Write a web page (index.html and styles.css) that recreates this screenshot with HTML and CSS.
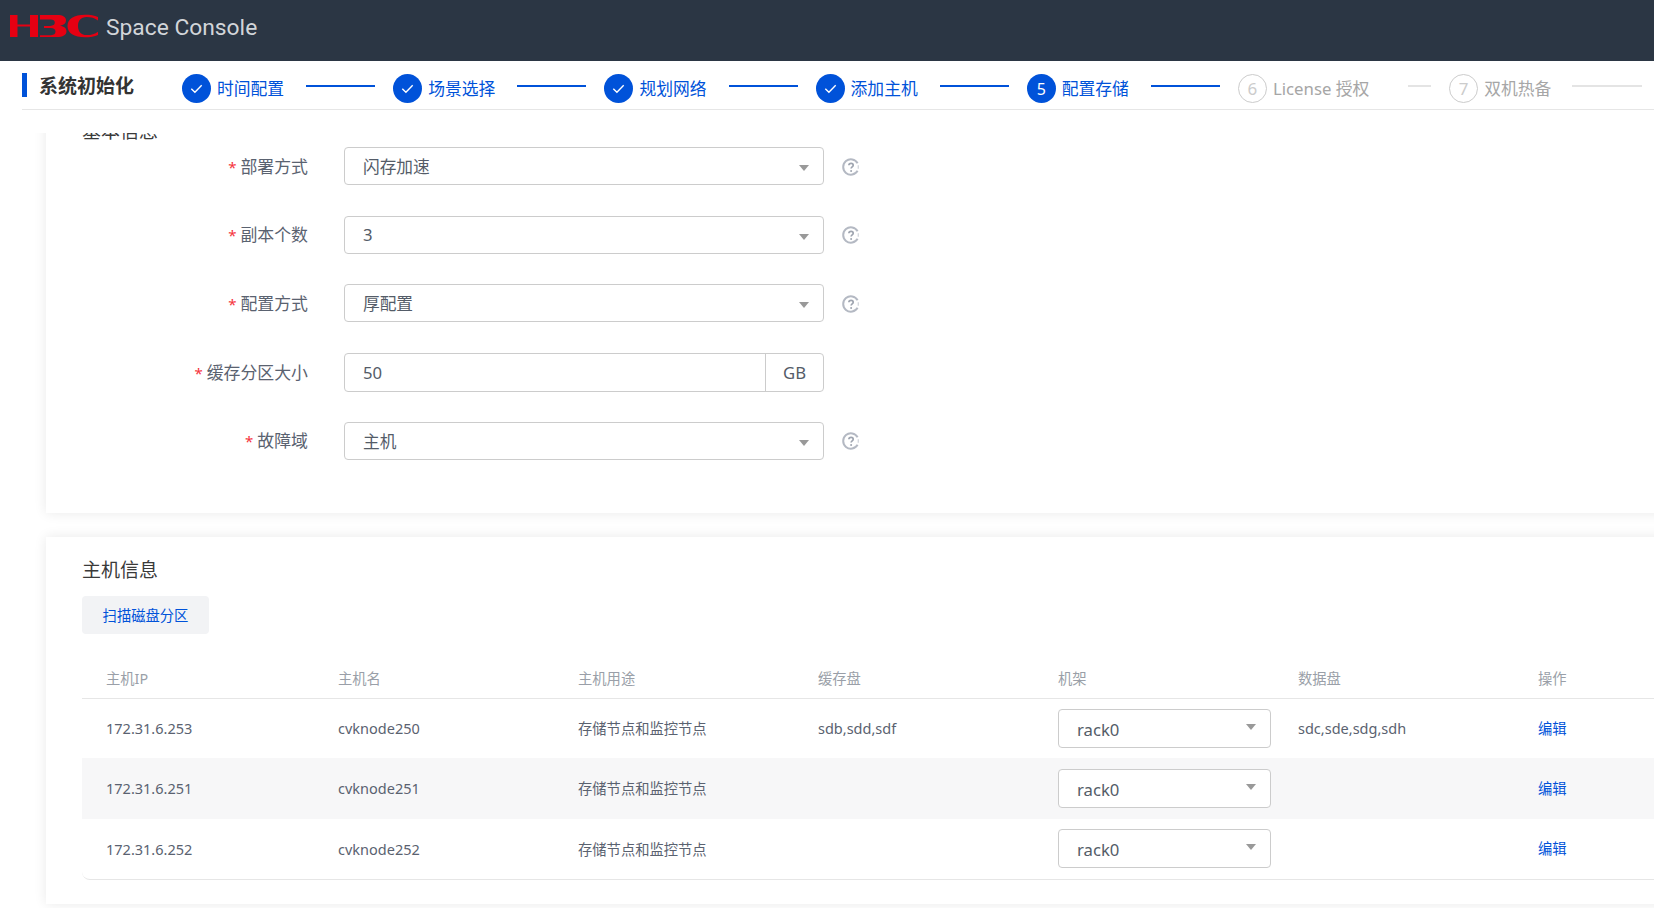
FILE: index.html
```html
<!DOCTYPE html>
<html lang="zh-CN">
<head>
<meta charset="utf-8">
<title>Space Console</title>
<link rel="stylesheet" href="styles.css">
</head>
<body>
<svg class="defs" width="0" height="0" aria-hidden="true">
  <symbol id="help" viewBox="0 0 18 18">
    <path d="M15.6 5.2A7.7 7.7 0 1 0 15.6 12.8" fill="none" stroke="#b4b9c3" stroke-width="2"/>
    <path d="M16.3 7.2v3.6" fill="none" stroke="#d5d8de" stroke-width="1.4"/>
    <path d="M6.9 7.3c0-1.300 1-2 2.200-2s2.100.8 2.100 1.900c0 1.600-2.100 1.700-2.100 3.400" fill="none" stroke="#9fa5b0" stroke-width="1.700"/>
    <circle cx="9.100" cy="12.900" r="1" fill="#9fa5b0"/>
  </symbol>
  <symbol id="check" viewBox="0 0 29 29">
    <path d="M9.300 14.800l3.600 3.400 6.800-7" fill="none" stroke="#fff" stroke-width="1.400"/>
  </symbol>
</svg>

<header class="topbar">
  <svg class="logo" width="90" height="24" viewBox="0 0 90 24" aria-label="H3C">
    <path fill="#e60012" d="M0 1h7.500v9.500h12.500V1h8v22h-8V12.500H7.500V23H0z"/>
    <path fill="#e60012" d="M30 1h17c6 0 9 2 9 5.500 0 2.800-2.200 4.600-6 5.300 4 .6 6.500 2.500 6.500 5.400 0 3.800-3.500 5.800-10 5.800H30v-1.800h11c3 0 4.500-1.300 4.500-3.600 0-2.500-1.600-3.700-5-3.700H34v-2h6c3.300 0 4.800-1.200 4.800-3.300 0-2-1.400-3.200-4.300-3.200H30z"/>
    <path fill="#e60012" d="M88 6.500C85 4 81 2.900 76.500 2.900 71 2.900 68 6.400 68 12c0 5.700 3.200 9.100 8.800 9.100 4.500 0 8.200-1 11.200-3.400V21c-3.500 1.600-8 2.300-13 2.300C64 23.300 57.500 19.200 57.500 12 57.500 5 64 .8 75 .8c5 0 9.500.6 13 2.200z"/>
  </svg>
  <span class="product">Space Console</span>
</header>

<nav class="subbar">
  <h1 class="page-title">系统初始化</h1>
  <ol class="steps">
    <li class="step done"><span class="dot"><svg width="29" height="29"><use href="#check"/></svg></span><span class="step-label">时间配置</span><span class="line"></span></li>
    <li class="step done"><span class="dot"><svg width="29" height="29"><use href="#check"/></svg></span><span class="step-label">场景选择</span><span class="line"></span></li>
    <li class="step done"><span class="dot"><svg width="29" height="29"><use href="#check"/></svg></span><span class="step-label">规划网络</span><span class="line"></span></li>
    <li class="step done"><span class="dot"><svg width="29" height="29"><use href="#check"/></svg></span><span class="step-label">添加主机</span><span class="line"></span></li>
    <li class="step done"><span class="dot">5</span><span class="step-label">配置存储</span><span class="line"></span></li>
    <li class="step todo"><span class="dot">6</span><span class="step-label">License 授权</span><span class="line"></span></li>
    <li class="step todo"><span class="dot">7</span><span class="step-label">双机热备</span><span class="line"></span></li>
  </ol>
</nav>

<main class="viewport">
  <div class="scrolled">
    <section class="card basic">
      <h2 class="card-title">基本信息</h2>
      <div class="form">
        <div class="row">
          <label class="label"><span class="req">*</span>部署方式</label>
          <div class="select"><span>闪存加速</span><i class="caret"></i></div>
          <svg class="help" width="18" height="18"><use href="#help"/></svg>
        </div>
        <div class="row">
          <label class="label"><span class="req">*</span>副本个数</label>
          <div class="select"><span>3</span><i class="caret"></i></div>
          <svg class="help" width="18" height="18"><use href="#help"/></svg>
        </div>
        <div class="row">
          <label class="label"><span class="req">*</span>配置方式</label>
          <div class="select"><span>厚配置</span><i class="caret"></i></div>
          <svg class="help" width="18" height="18"><use href="#help"/></svg>
        </div>
        <div class="row">
          <label class="label"><span class="req">*</span>缓存分区大小</label>
          <div class="select input-group"><span class="value">50</span><span class="addon">GB</span></div>
        </div>
        <div class="row">
          <label class="label"><span class="req">*</span>故障域</label>
          <div class="select"><span>主机</span><i class="caret"></i></div>
          <svg class="help" width="18" height="18"><use href="#help"/></svg>
        </div>
      </div>
    </section>

    <section class="card hosts">
      <h2 class="card-title">主机信息</h2>
      <button class="scan" type="button">扫描磁盘分区</button>
      <div class="table-wrap">
        <table class="table">
          <colgroup>
            <col class="c1"><col class="c2"><col class="c2"><col class="c2"><col class="c2"><col class="c2"><col class="c2">
          </colgroup>
          <thead>
            <tr><th>主机IP</th><th>主机名</th><th>主机用途</th><th>缓存盘</th><th>机架</th><th>数据盘</th><th>操作</th></tr>
          </thead>
          <tbody>
            <tr>
              <td>172.31.6.253</td><td>cvknode250</td><td class="usage">存储节点和监控节点</td><td>sdb,sdd,sdf</td>
              <td><div class="select compact"><span>rack0</span><i class="caret"></i></div></td>
              <td>sdc,sde,sdg,sdh</td><td><a class="edit">编辑</a></td>
            </tr>
            <tr class="alt">
              <td>172.31.6.251</td><td>cvknode251</td><td class="usage">存储节点和监控节点</td><td></td>
              <td><div class="select compact"><span>rack0</span><i class="caret"></i></div></td>
              <td></td><td><a class="edit">编辑</a></td>
            </tr>
            <tr>
              <td>172.31.6.252</td><td>cvknode252</td><td class="usage">存储节点和监控节点</td><td></td>
              <td><div class="select compact"><span>rack0</span><i class="caret"></i></div></td>
              <td></td><td><a class="edit">编辑</a></td>
            </tr>
          </tbody>
        </table>
      </div>
    </section>
  </div>
</main>
</body>
</html>
```

FILE: styles.css
```css
* { box-sizing: border-box; }
html, body { height: 100%; }
body {
  margin: 0;
  height: 908px;
  overflow: hidden;
  display: flex;
  flex-direction: column;
  background: #fff;
  color: #545c68;
  font-family: "Noto Sans", "Noto Sans CJK SC", sans-serif;
}
.defs { position: absolute; }

.topbar {
  flex: none;
  height: 61px;
  background: #2b3644;
  display: flex;
  align-items: center;
  padding: 0 0 5px 10px;
}
.logo { flex: none; margin-bottom: 4px; }
.product {
  margin: 0 0 2px 6px;
  font-family: Roboto, sans-serif;
  font-size: 22.8px;
  color: #d2d5d9;
}

.subbar {
  flex: none;
  height: 49px;
  margin-left: 22px;
  border-bottom: 1px solid #e6e6e6;
  display: flex;
  align-items: flex-start;
}
.page-title {
  flex: none;
  width: 160px;
  margin: 12px 0 0;
  height: 24px;
  padding-left: 12px;
  border-left: 5px solid #0052d9;
  font-size: 19px;
  line-height: 24px;
  font-weight: 700;
  color: #333;
  font-family: "Noto Sans CJK SC", sans-serif;
}
.steps {
  list-style: none;
  margin: 13px 0 0;
  padding: 0;
  display: grid;
  grid-template-columns: repeat(7, 211.2px);
}
.step {
  display: flex;
  align-items: flex-start;
  padding-right: 18px;
  font-size: 16.8px;
}
.dot {
  flex: none;
  width: 29px;
  height: 29px;
  border-radius: 50%;
  display: flex;
  align-items: center;
  justify-content: center;
  font-size: 16px;
}
.step-label {
  flex: none;
  margin-left: 6px;
  line-height: 29px;
  white-space: nowrap;
}
.line {
  flex: 1;
  height: 2px;
  margin: 11px 0 0 22px;
  background: #0052d9;
}
.done .dot { background: #0052d9; color: #fff; }
.done .step-label { color: #0052d9; }
.todo .dot { border: 1px solid #ccc; color: #ccc; font-size: 17px; }
.todo .step-label { color: #a6a6a6; }
.todo .line { background: #e4e4e4; margin-left: 39px; }
.step:last-child .line { margin-left: 21px; }

.viewport {
  flex: 1;
  margin-top: 23px;
  overflow: hidden;
  min-height: 0;
}
.scrolled {
  margin-top: -35px;
  padding-left: 46px;
  margin-right: -24px;
  display: flex;
  flex-direction: column;
  gap: 24px;
}
.card {
  background: #fff;
  box-shadow: 0 0 12px rgba(0, 0, 0, .09);
  padding: 18px 0 0 36px;
}
.basic { height: 415px; }
.hosts { height: 367px; }
.card-title {
  margin: 0;
  height: 28px;
  font-size: 19px;
  line-height: 28px;
  font-weight: 400;
  color: #3a3a3a;
  font-family: "Noto Sans CJK SC", sans-serif;
}

.form { margin-top: 3px; display: flex; flex-direction: column; gap: 30.7px; }
.row { display: flex; align-items: center; height: 38px; }
.label {
  flex: none;
  width: 226px;
  margin: 0 36px 2px 0;
  text-align: right;
  font-size: 16.9px;
  color: #5a6270;
}
.req { color: #f5333d; margin-right: 4px; font-size: 15px; }
.select {
  flex: none;
  position: relative;
  width: 480px;
  height: 38px;
  padding: 0 18px;
  display: flex;
  align-items: center;
  background: #fff;
  border: 1px solid #ccc;
  border-radius: 4px;
  font-size: 16.7px;
  color: #545c68;
}
.caret {
  position: absolute;
  right: 14px;
  top: 17px;
  width: 0;
  height: 0;
  border-left: 5.5px solid transparent;
  border-right: 5.5px solid transparent;
  border-top: 6.5px solid #999;
}
.help { flex: none; margin: 1px 0 0 18px; }
.input-group { padding: 0; height: 39px; }
.value { flex: 1; padding-left: 18px; }
.addon {
  flex: none;
  width: 58px;
  height: 100%;
  border-left: 1px solid #ccc;
  display: flex;
  align-items: center;
  justify-content: center;
}
.compact { width: 213px; height: 39px; padding-top: 2px; }
.compact .caret { right: 14px; top: 14px; }

.scan {
  display: block;
  margin: 13px 0 25px;
  width: 127px;
  height: 38px;
  padding: 0 0 2px;
  border: 0;
  border-radius: 4px;
  background: #f2f3f5;
  color: #0052d9;
  font-family: "Noto Sans CJK SC", sans-serif;
  font-size: 14.3px;
}
.table-wrap {
  border-bottom: 1px solid #e6e6e6;
  border-radius: 0 0 8px 8px;
  overflow: hidden;
}
.table {
  width: 100%;
  table-layout: fixed;
  border-collapse: collapse;
  font-size: 14.5px;
}
.c1 { width: 232px; }
.c2 { width: 240px; }
th, td {
  padding: 0 0 0 24px;
  text-align: left;
  font-weight: 400;
  white-space: nowrap;
}
th {
  height: 39px;
  padding-bottom: 2px;
  font-size: 14.3px;
  color: #9a9fa8;
  border-bottom: 1px solid #e6e6e6;
}
td { height: 60.3px; color: #5a6270; }
td.usage { font-size: 14.3px; padding-bottom: 1px; }
.alt td { background: #f7f7f8; }
.edit { color: #0052d9; position: relative; top: -1px; font-size: 14.3px; }
```
